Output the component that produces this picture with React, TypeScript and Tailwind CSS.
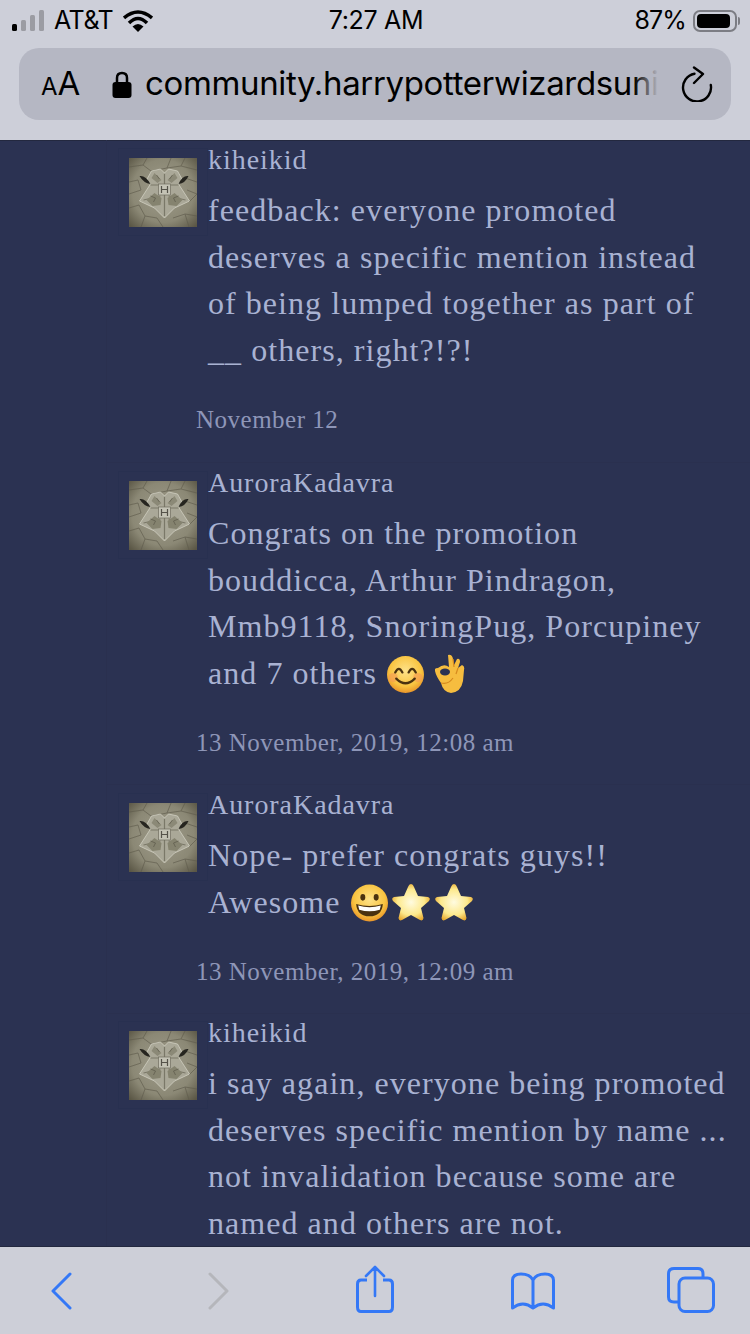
import React from 'react';

type Post = {
  name: string;
  lines: React.ReactNode[];
  date: string;
};

const Crest = () => (
  <svg viewBox="0 0 68 69" className="block w-[68px] h-[69px]">
    <defs>
      <radialGradient id="stone" cx="50%" cy="48%" r="70%">
        <stop offset="0%" stopColor="#a09d8c" />
        <stop offset="65%" stopColor="#8b8875" />
        <stop offset="100%" stopColor="#5a5645" />
      </radialGradient>
    </defs>
    <rect width="68" height="69" fill="url(#stone)" />
    <g stroke="#5f5c4c" strokeWidth="0.8" fill="none" opacity="0.8">
      <path d="M0 9 L14 7 L18 0 M14 7 L22 13 L38 10 L42 0 M38 10 L52 8 L68 12 M52 8 L56 0" />
      <path d="M0 24 L9 22 L12 32 L0 36 M56 20 L68 24 M58 32 L68 36 L60 44" />
      <path d="M0 50 L10 47 L16 58 L12 69 M16 58 L28 60 L34 69 M44 60 L56 56 L68 58 M56 56 L60 69" />
    </g>
    <g transform="translate(1.5 -2)">
      <path d="M21 15 L30 13 L34 17 L38 13 L47 15 L52 24 L48 28 L59 45 L44 52 L34 62 L24 52 L9 45 L20 28 L16 24 Z" fill="#aaa898" stroke="#d0cfc1" strokeWidth="0.8" />
      <path d="M34 18 V60 M20 29 H48 M13 44 L30 40 M55 44 L38 40" stroke="#7a7868" strokeWidth="1.2" fill="none" />
      <path d="M16 44 L24 37 L31 42 L30 49 L22 50 Z M52 44 L44 37 L37 42 L38 49 L46 50 Z" fill="#85836f" />
      <path d="M24 17 L31 24 L27 27 L21 22 Z M44 17 L37 24 L41 27 L47 22 Z" fill="#8b8977" />
      <path d="M20 40 L25 42 L23 46 M48 40 L43 42 L45 46 M26 19 L29 23 M42 19 L39 23" stroke="#5f5d4e" strokeWidth="0.8" fill="none" />
      <path d="M9 20 Q15 19 20 28 Q13 27 9 20 Z M58 20 Q52 19 48 28 Q55 27 58 20 Z" fill="#26251f" />
      <rect x="28" y="28" width="12" height="11" fill="#c4c3b5" stroke="#6f6d5e" strokeWidth="0.7" />
      <path d="M31 30 V37 M37 30 V37 M31 33.5 H37" stroke="#55534a" strokeWidth="1.2" />
    </g>
  </svg>
);

const Smile = () => (
  <svg viewBox="0 0 36 36" className="inline-block w-[37px] h-[37px] align-[-9px] ml-[1px]">
    <defs>
      <radialGradient id="face" cx="50%" cy="40%" r="60%">
        <stop offset="0%" stopColor="#fde28a" />
        <stop offset="70%" stopColor="#f9c440" />
        <stop offset="100%" stopColor="#e9952a" />
      </radialGradient>
    </defs>
    <circle cx="18" cy="18" r="18" fill="url(#face)" />
    <circle cx="6" cy="21" r="4.5" fill="#f59a55" opacity="0.6" />
    <circle cx="30" cy="21" r="4.5" fill="#f59a55" opacity="0.6" />
    <path d="M8 16 Q11.5 9 15 16 M21 16 Q24.5 9 28 16" stroke="#4a3210" strokeWidth="2.2" fill="none" strokeLinecap="round" />
    <path d="M9 22 Q18 31 27 22" stroke="#4a3210" strokeWidth="2.2" fill="none" strokeLinecap="round" />
  </svg>
);

const OkHand = () => (
  <svg viewBox="0 0 30 39" className="inline-block w-[30px] h-[39px] align-[-9px] ml-[11px]">
    <path d="M13 1 Q17 0 18 5 L19 11 L22 5 Q25 4 25 8 L23 14 L27 11 Q30 12 29 16 L28 27 Q26 38 16 39 Q8 38 6 29 Q1 22 0 17 Q-1 14 3 14 Q9 9 14 13 Z" fill="#f6bd3f" />
    <ellipse cx="10" cy="18" rx="5" ry="3.4" fill="#2b3252" />
    <path d="M6 29 Q13 31 18 24 M18 5 L19 13 M23 14 L21 20" stroke="#d68a1e" strokeWidth="1.2" fill="none" />
  </svg>
);

const Grin = () => (
  <svg viewBox="0 0 36 36" className="inline-block w-[37px] h-[38px] align-[-9px] ml-[2px]">
    <circle cx="18" cy="18" r="18" fill="url(#face)" />
    <ellipse cx="11.5" cy="12.5" rx="2.4" ry="3.2" fill="#4a3210" />
    <ellipse cx="24.5" cy="12.5" rx="2.4" ry="3.2" fill="#4a3210" />
    <path d="M5 19 Q18 23 31 19 Q30 31 18 31 Q6 31 5 19 Z" fill="#4a3210" />
    <path d="M7 20.5 Q18 24 29 20.5 L28 24.5 Q18 27.5 8 24.5 Z" fill="#ffffff" />
  </svg>
);

const Star = () => (
  <svg viewBox="0 0 40 39" className="inline-block w-[40px] h-[39px] align-[-9px] ml-[3px]">
    <defs>
      <radialGradient id="starFill" cx="50%" cy="50%" r="55%">
        <stop offset="0%" stopColor="#fffbe0" />
        <stop offset="65%" stopColor="#fde98c" />
        <stop offset="100%" stopColor="#e8a92e" />
      </radialGradient>
    </defs>
    <path d="M20 1 Q22 1 23 4 L27 13 L37 14 Q40 15 38 18 L30 25 L32.5 35 Q32 38.5 29 37 L20 32 L11 37 Q8 38.5 7.5 35 L10 25 L2 18 Q0 15 3 14 L13 13 L17 4 Q18 1 20 1 Z" fill="url(#starFill)" />
  </svg>
);

const posts: Post[] = [
  {
    name: 'kiheikid',
    lines: [
      'feedback: everyone promoted',
      'deserves a specific mention instead',
      'of being lumped together as part of',
      '__ others, right?!?!',
    ],
    date: 'November 12',
  },
  {
    name: 'AuroraKadavra',
    lines: [
      'Congrats on the promotion',
      'bouddicca, Arthur Pindragon,',
      'Mmb9118, SnoringPug, Porcupiney',
      <>and 7 others <Smile /><OkHand /></>,
    ],
    date: '13 November, 2019, 12:08 am',
  },
  {
    name: 'AuroraKadavra',
    lines: [
      'Nope- prefer congrats guys!!',
      <>Awesome <Grin /><Star /><Star /></>,
    ],
    date: '13 November, 2019, 12:09 am',
  },
  {
    name: 'kiheikid',
    lines: [
      'i say again, everyone being promoted',
      'deserves specific mention by name ...',
      'not invalidation because some are',
      'named and others are not.',
    ],
    date: '',
  },
];

const StatusBar = () => (
  <div className="h-[48px] flex items-center justify-between pl-[12px] pr-[10px] pb-[7px] font-['Inter',sans-serif] text-[25px] text-black">
    <div className="flex items-center w-[220px]">
      <svg viewBox="0 0 32 21" className="w-[32px] h-[21px]">
        <rect x="0" y="14" width="5" height="7" rx="1.5" fill="#000" />
        <rect x="9" y="10" width="5" height="11" rx="1.5" fill="#9b9ca3" />
        <rect x="18" y="5" width="5" height="16" rx="1.5" fill="#9b9ca3" />
        <rect x="27" y="0" width="5" height="21" rx="1.5" fill="#9b9ca3" />
      </svg>
      <span className="ml-[10px] tracking-[-0.5px]">AT&amp;T</span>
      <svg viewBox="0 0 30 22" className="ml-[10px] w-[30px] h-[22px]">
        <path d="M1 8 Q15 -4 29 8" stroke="#000" strokeWidth="3.5" fill="none" />
        <path d="M6 13 Q15 4 24 13" stroke="#000" strokeWidth="3.5" fill="none" />
        <path d="M15 22 L9.5 16.5 Q15 11.5 20.5 16.5 Z" fill="#000" />
      </svg>
    </div>
    <span className="tracking-[-0.3px]">7:27 AM</span>
    <div className="flex items-center justify-end w-[220px]">
      <span className="tracking-[-0.9px]">87%</span>
      <div className="ml-[7px] w-[44px] h-[22px] rounded-[7px] border-2 border-[#7c7d84] p-[2px]">
        <div className="w-[33px] h-full rounded-[4px] bg-black" />
      </div>
      <div className="ml-[1px] w-[2px] h-[8px] rounded-r bg-[#7c7d84]" />
    </div>
  </div>
);

const UrlBar = () => (
  <div className="mx-[19px] h-[72px] rounded-[20px] bg-[#b5b7c3] flex items-center text-black font-['Inter',sans-serif]">
    <span className="ml-[22px] w-[38px] flex items-baseline">
      <span className="text-[24px]">A</span>
      <span className="text-[33px]">A</span>
    </span>
    <svg viewBox="0 0 20 27" className="ml-[33px] w-[20px] h-[27px]">
      <path d="M5 12 V7 Q5 2 10 2 Q15 2 15 7 V12" stroke="#000" strokeWidth="2.5" fill="none" />
      <rect x="0.5" y="11" width="19" height="16" rx="3" fill="#000" />
    </svg>
    <div className="relative ml-[13px] w-[513px] whitespace-nowrap text-[33px] tracking-[-0.35px]">
      community.harrypotterwizardsuni
      <div className="absolute inset-y-0 right-0 w-[24px] bg-gradient-to-r from-transparent to-[#b5b7c3]" />
    </div>
    <svg viewBox="0 0 32 36" className="ml-[23px] w-[32px] h-[36px]">
      <path d="M13.5 7.7 A14 14 0 1 0 29.8 19" stroke="#000" strokeWidth="2.4" fill="none" strokeLinecap="round" />
      <path d="M13 1.5 L22 8 L13 17" stroke="#000" strokeWidth="2.4" fill="none" strokeLinecap="round" strokeLinejoin="round" />
    </svg>
  </div>
);

const PostRow = ({ post }: { post: Post }) => (
  <div className="pt-[6px] pb-[26px] first:pb-[27px] last:-mt-[1px] border-b border-[#2a304f]">
    <div className="flex">
      <div className="ml-[11px] mt-[2px] w-[90px] h-[88px] shrink-0 border border-[#283050] pt-[9px] pl-[10px]">
        <Crest />
      </div>
      <div className="min-w-0 whitespace-nowrap">
        <div className="h-[28px] leading-[28px] text-[28px] tracking-[0.95px] text-[#a9b2d2]">{post.name}</div>
        <div className="mt-[13px] text-[32px] leading-[46.5px] tracking-[1.05px] text-[#a9b2d2]">
          {post.lines.map((line, i) => (
            <div key={i} className="h-[46.5px]">{line}</div>
          ))}
        </div>
      </div>
    </div>
    {post.date && (
      <div className="mt-[32px] pl-[89px] h-[30px] leading-[30px] text-[25px] tracking-[0.5px] text-[#8e96b8]">{post.date}</div>
    )}
  </div>
);

const BottomBar = () => (
  <div className="h-[88px] shrink-0 border-t border-[#23283f] bg-[#cdcfd8]">
    <div className="flex items-start h-full">
      <svg viewBox="0 0 23 38" className="ml-[50px] mt-[25px] w-[23px] h-[38px]">
        <path d="M20 2 L3 19 L20 36" stroke="#3478f6" strokeWidth="3" fill="none" strokeLinecap="round" strokeLinejoin="round" />
      </svg>
      <svg viewBox="0 0 23 38" className="ml-[134px] mt-[25px] w-[23px] h-[38px]">
        <path d="M3 2 L20 19 L3 36" stroke="#b5b6bb" strokeWidth="3" fill="none" strokeLinecap="round" strokeLinejoin="round" />
      </svg>
      <svg viewBox="0 0 38 48" className="ml-[126px] mt-[18px] w-[38px] h-[48px]">
        <path d="M11 15 H5 Q1.5 15 1.5 19 V42 Q1.5 46.5 5 46.5 H33 Q36.5 46.5 36.5 42 V19 Q36.5 15 33 15 H27" stroke="#3478f6" strokeWidth="3" fill="none" />
        <path d="M19 31 V2 M10 11 L19 2 L28 11" stroke="#3478f6" strokeWidth="2.6" fill="none" strokeLinecap="round" strokeLinejoin="round" />
      </svg>
      <svg viewBox="0 0 44 38" className="ml-[117px] mt-[25px] w-[44px] h-[38px]">
        <path d="M22 8 Q19 2 10 2 Q2 2 1.5 8 V36 Q12 28 22 36 Q32 28 42.5 36 V8 Q42 2 34 2 Q25 2 22 8 V35" stroke="#3478f6" strokeWidth="3" fill="none" strokeLinejoin="round" />
      </svg>
      <svg viewBox="0 0 48 46" className="ml-[112px] mt-[20px] w-[48px] h-[46px]">
        <path d="M11 35 H7 Q1.5 35 1.5 30 V7 Q1.5 1.5 7 1.5 H31 Q36 1.5 36 7 V10" stroke="#3478f6" strokeWidth="3" fill="none" />
        <rect x="12" y="11" width="34.5" height="33.5" rx="6" stroke="#3478f6" strokeWidth="3" fill="none" />
      </svg>
    </div>
  </div>
);

export default function App() {
  return (
    <div className="w-[750px] h-[1334px] flex flex-col overflow-hidden bg-[#2b3252] font-['Liberation_Serif',serif]">
      <div className="h-[140px] shrink-0 bg-[#cdcfd9]">
        <StatusBar />
        <UrlBar />
      </div>
      <div className="flex-1 min-h-0 overflow-hidden pl-[106px] shadow-[inset_0_1px_0_#23283f]">
        <div className="border-l border-[#2a304f]">
          {posts.map((post, i) => (
            <PostRow key={i} post={post} />
          ))}
        </div>
      </div>
      <BottomBar />
    </div>
  );
}
